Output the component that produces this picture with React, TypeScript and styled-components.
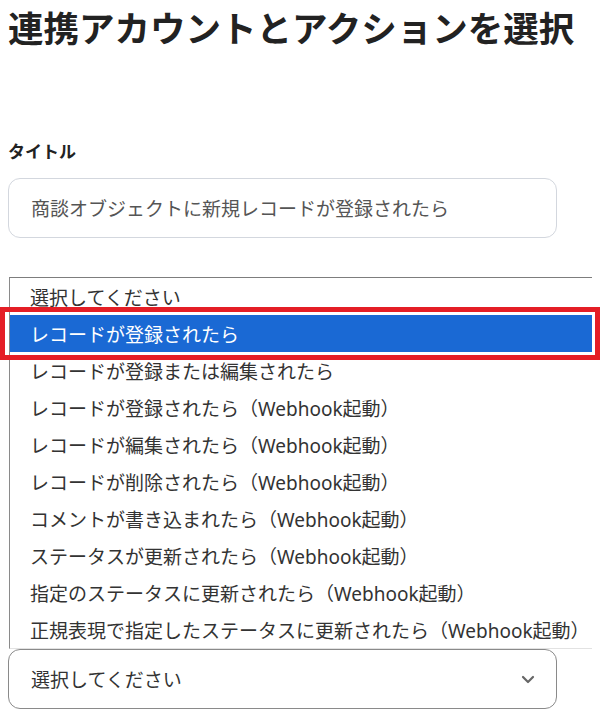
import React from "react";
import styled, { createGlobalStyle } from "styled-components";

const Global = createGlobalStyle`
  html, body { margin: 0; padding: 0; background: #fff; }
  body {
    font-family: "Noto Sans", "Noto Sans CJK JP", sans-serif;
    color: #222;
    overflow: hidden;
  }
`;

const Page = styled.div`
  width: 600px;
  height: 720px;
  padding: 0 8px;
  box-sizing: border-box;
  display: flex;
  flex-direction: column;
`;

const Title = styled.h1`
  margin: 0;
  padding-top: 6px;
  font-size: 35.5px;
  line-height: 44px;
  font-weight: 700;
  color: #222;
  white-space: nowrap;
`;

const Label = styled.div`
  margin-top: 90px;
  font-size: 17px;
  line-height: 24px;
  font-weight: 700;
  color: #222;
`;

const Field = styled.div<{ $strong?: boolean }>`
  box-sizing: border-box;
  width: 549px;
  height: 60px;
  border: 1px solid ${(p) => (p.$strong ? "#8a8a8a" : "#d3d7de")};
  border-radius: 12px;
  display: flex;
  align-items: center;
  justify-content: space-between;
  padding: 0 22px;
  font-size: 19px;
  color: ${(p) => (p.$strong ? "#333" : "#555")};
  flex-shrink: 0;
`;

const TitleField = styled(Field)`
  margin-top: 14px;
`;

const ListBox = styled.div`
  margin-top: 39px;
  margin-left: 1px;
  width: 583px;
  box-sizing: border-box;
  border-top: 1px solid #7d7d7d;
  border-left: 1px solid #8a8a8a;
  border-bottom: 1px solid #e2e2e2;
  display: flex;
  flex-direction: column;
  flex-shrink: 0;
`;

const Option = styled.div<{ $selected?: boolean }>`
  position: relative;
  height: 37px;
  display: flex;
  align-items: center;
  padding-left: 20px;
  font-size: 19px;
  white-space: nowrap;
  color: ${(p) => (p.$selected ? "#fff" : "#333")};
  background: ${(p) => (p.$selected ? "#1a69d4" : "transparent")};
  ${(p) =>
    p.$selected &&
    `
    &::after {
      content: "";
      position: absolute;
      left: -10px;
      top: -8px;
      right: -8px;
      bottom: -8px;
      border: 5px solid #e41e26;
      pointer-events: none;
    }
  `}
`;

const Chevron = styled.svg`
  width: 16px;
  height: 16px;
  margin-right: -2px;
`;

const options = [
  "選択してください",
  "レコードが登録されたら",
  "レコードが登録または編集されたら",
  "レコードが登録されたら（Webhook起動）",
  "レコードが編集されたら（Webhook起動）",
  "レコードが削除されたら（Webhook起動）",
  "コメントが書き込まれたら（Webhook起動）",
  "ステータスが更新されたら（Webhook起動）",
  "指定のステータスに更新されたら（Webhook起動）",
  "正規表現で指定したステータスに更新されたら（Webhook起動）",
];

export default function App() {
  return (
    <>
      <Global />
      <Page>
        <Title>連携アカウントとアクションを選択</Title>
        <Label>タイトル</Label>
        <TitleField>商談オブジェクトに新規レコードが登録されたら</TitleField>
        <ListBox>
          {options.map((o, i) => (
            <Option key={i} $selected={i === 1}>
              {o}
            </Option>
          ))}
        </ListBox>
        <Field $strong>
          <span>選択してください</span>
          <Chevron viewBox="0 0 16 16" fill="none">
            <path d="M3 6l5 5 5-5" stroke="#666" strokeWidth="2.2" strokeLinecap="round" strokeLinejoin="round" />
          </Chevron>
        </Field>
      </Page>
    </>
  );
}
